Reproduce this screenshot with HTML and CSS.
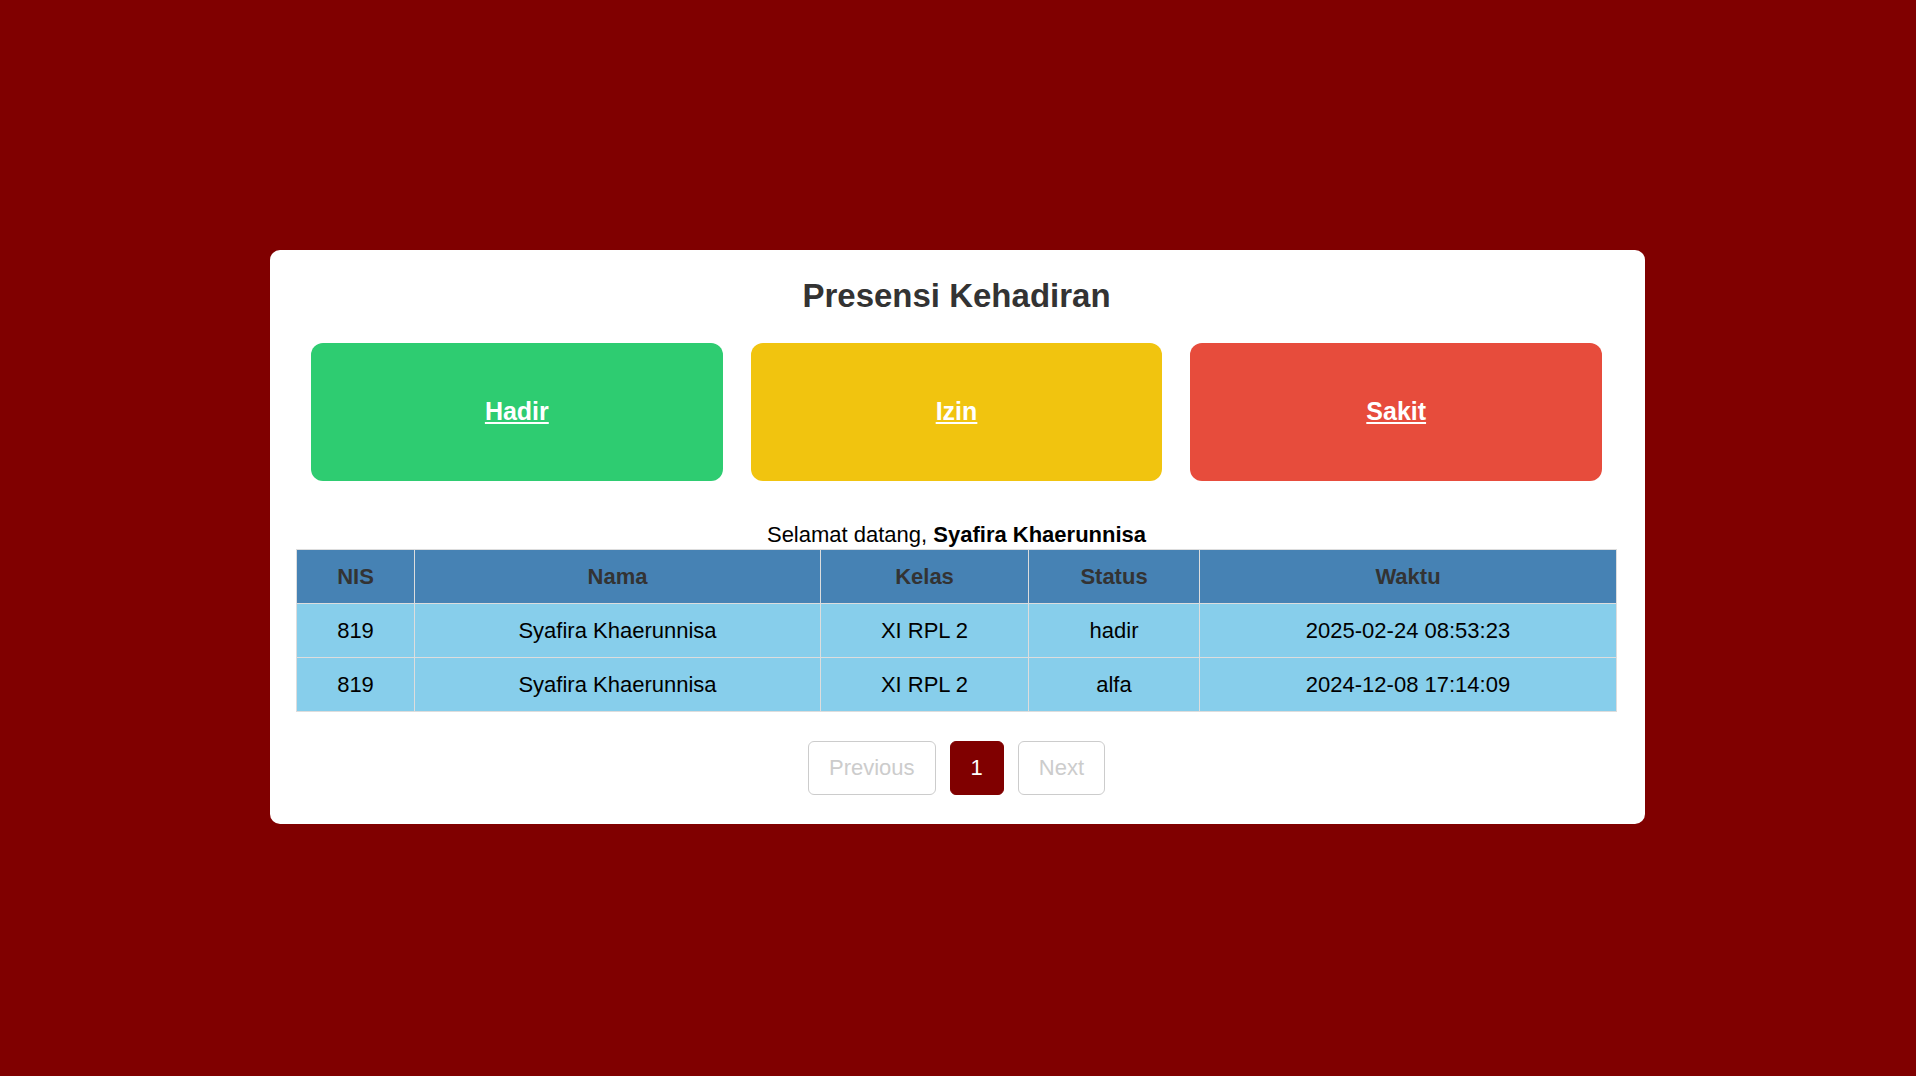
FILE: index.html
```html
<!DOCTYPE html>
<html lang="id">
<head>
<meta charset="utf-8">
<title>Presensi Kehadiran</title>
<link rel="stylesheet" href="styles.css">
</head>
<body>
<div class="card">
  <h2 class="title">Presensi Kehadiran</h2>
  <div class="actions">
    <a href="#" class="action hadir">Hadir</a>
    <a href="#" class="action izin">Izin</a>
    <a href="#" class="action sakit">Sakit</a>
  </div>
  <p class="welcome">Selamat datang, <strong>Syafira Khaerunnisa</strong></p>
  <table class="data">
    <colgroup>
      <col class="c-nis">
      <col class="c-nama">
      <col class="c-kelas">
      <col class="c-status">
      <col class="c-waktu">
    </colgroup>
    <thead>
      <tr><th>NIS</th><th>Nama</th><th>Kelas</th><th>Status</th><th>Waktu</th></tr>
    </thead>
    <tbody>
      <tr><td>819</td><td>Syafira Khaerunnisa</td><td>XI RPL 2</td><td>hadir</td><td>2025-02-24 08:53:23</td></tr>
      <tr><td>819</td><td>Syafira Khaerunnisa</td><td>XI RPL 2</td><td>alfa</td><td>2024-12-08 17:14:09</td></tr>
    </tbody>
  </table>
  <div class="pagination">
    <span class="page disabled">Previous</span>
    <span class="page active">1</span>
    <span class="page disabled">Next</span>
  </div>
</div>
</body>
</html>
```

FILE: styles.css
```css
* { box-sizing: border-box; }
html, body { margin: 0; padding: 0; }
body {
  background: #800000;
  font-family: "Liberation Sans", Arial, sans-serif;
  min-height: 100vh;
  display: flex;
  align-items: center;
  justify-content: center;
  color: #000;
}
.card {
  width: 1375px;
  background: #fff;
  border-radius: 10px;
  padding: 27px 28px 29px 26px;
  margin-top: -2px;
  margin-left: -1px;
}
.title {
  margin: 0 0 28px;
  text-align: center;
  font-size: 33px;
  line-height: 38px;
  font-weight: bold;
  color: #333;
}
.actions {
  display: flex;
  gap: 28px;
  padding: 0 15px;
  margin-bottom: 41px;
}
.action {
  flex: 1;
  height: 138px;
  border-radius: 12px;
  display: flex;
  align-items: center;
  justify-content: center;
  color: #fff;
  font-size: 25px;
  font-weight: bold;
  text-decoration: underline;
  padding-bottom: 2px;
}
.hadir { background: #2ecc71; }
.izin { background: #f1c40f; }
.sakit { background: #e74c3c; }
.welcome {
  margin: 0 0 2px;
  text-align: center;
  font-size: 22px;
  line-height: 25px;
}
.data {
  width: 100%;
  border-collapse: collapse;
  table-layout: fixed;
  font-size: 22px;
}
.c-nis { width: 118px; }
.c-nama { width: 406px; }
.c-kelas { width: 208px; }
.c-status { width: 171px; }
.c-waktu { width: auto; }
.data th, .data td {
  border: 1px solid #ddd;
  padding: 14px 8px;
  line-height: 25px;
  height: 54px;
  text-align: center;
}
.data th {
  background: #4682b4;
  color: #333;
  font-weight: bold;
}
.data td {
  background: #87ceeb;
  color: #000;
}
.pagination {
  display: flex;
  justify-content: center;
  gap: 14px;
  margin-top: 29px;
}
.page {
  font-size: 22px;
  line-height: 26px;
  padding: 13px 20px;
  border: 1px solid #ccc;
  border-radius: 6px;
  color: #ccc;
}
.page.active {
  background: #800000;
  border-color: #800000;
  color: #fff;
}
```
